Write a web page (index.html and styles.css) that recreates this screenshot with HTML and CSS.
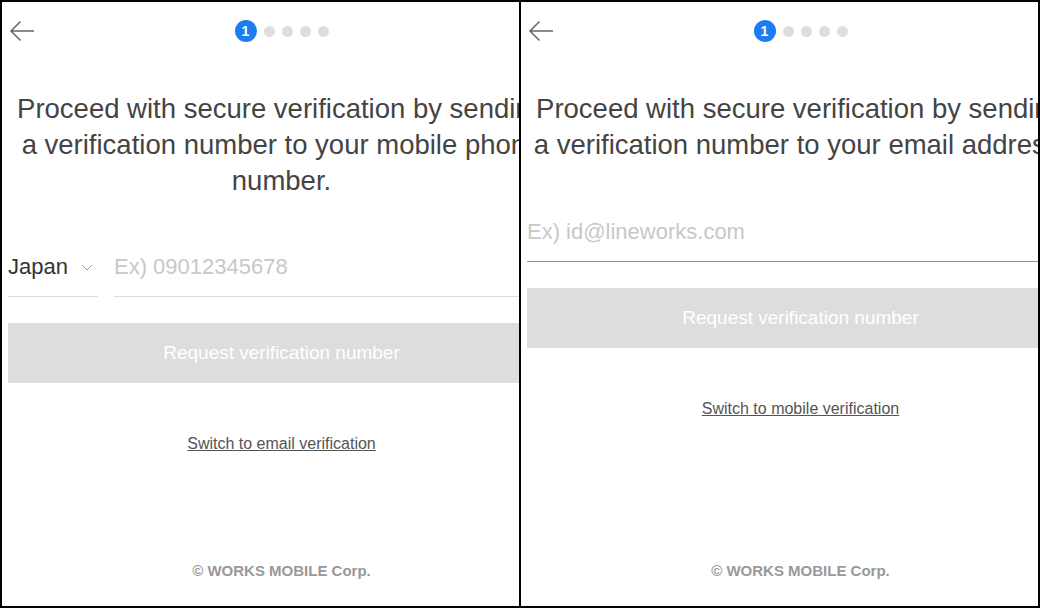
FILE: index.html
```html
<!DOCTYPE html>
<html lang="en">
<head>
<meta charset="utf-8">
<title>Verification</title>
<link rel="stylesheet" href="styles.css">
</head>
<body>
<div class="frame">
  <section class="panel">
    <div class="screen">
      <header class="header">
        <button class="back" aria-label="Back">
          <svg width="26" height="22" viewBox="0 0 26 22"><path d="M25 11H2M11.5 1.5L2 11l9.5 9.5" fill="none" stroke="#666" stroke-width="1.5"/></svg>
        </button>
        <div class="steps">
          <span class="step-current">1</span>
          <span class="dot"></span><span class="dot"></span><span class="dot"></span><span class="dot"></span>
        </div>
        <span></span>
      </header>
      <h1 class="title">Proceed with secure verification by sending a verification number to your mobile phone number.</h1>
      <div class="field-row">
        <div class="country">
          <span>Japan</span>
          <svg width="12" height="7" viewBox="0 0 12 7"><path d="M1 1l5 5 5-5" fill="none" stroke="#999" stroke-width="1"/></svg>
        </div>
        <div class="field">
          <input class="text-input" type="tel" placeholder="Ex) 09012345678">
        </div>
      </div>
      <button class="request">Request verification number</button>
      <a class="switch" href="#">Switch to email verification</a>
      <footer class="footer">© WORKS MOBILE Corp.</footer>
    </div>
  </section>
  <section class="panel">
    <div class="screen">
      <header class="header">
        <button class="back" aria-label="Back">
          <svg width="26" height="22" viewBox="0 0 26 22"><path d="M25 11H2M11.5 1.5L2 11l9.5 9.5" fill="none" stroke="#666" stroke-width="1.5"/></svg>
        </button>
        <div class="steps">
          <span class="step-current">1</span>
          <span class="dot"></span><span class="dot"></span><span class="dot"></span><span class="dot"></span>
        </div>
        <span></span>
      </header>
      <h1 class="title">Proceed with secure verification by sending a verification number to your email address.</h1>
      <div class="field-row email-row">
        <div class="field focused">
          <input class="text-input" type="email" placeholder="Ex) id@lineworks.com">
        </div>
      </div>
      <button class="request">Request verification number</button>
      <a class="switch" href="#">Switch to mobile verification</a>
      <footer class="footer">© WORKS MOBILE Corp.</footer>
    </div>
  </section>
</div>
</body>
</html>
```

FILE: styles.css
```css
html, body {
  margin: 0;
  padding: 0;
  background: #000;
}
body {
  font-family: "Liberation Sans", Arial, sans-serif;
  width: 1040px;
  height: 608px;
  overflow: hidden;
}
.frame {
  display: flex;
  gap: 2px;
  padding: 2px;
  box-sizing: border-box;
  width: 1040px;
  height: 608px;
}
.panel {
  width: 517px;
  height: 604px;
  overflow: hidden;
  background: #fff;
}
.screen {
  width: 559px;
  height: 604px;
  box-sizing: border-box;
  padding: 0 6px;
  display: flex;
  flex-direction: column;
}
.header {
  height: 58px;
  display: grid;
  grid-template-columns: 1fr auto 1fr;
  align-items: center;
}
.back {
  justify-self: start;
  margin-left: 1px;
  padding: 0;
  border: 0;
  background: none;
  display: flex;
  width: 26px;
  height: 22px;
}
.steps {
  display: flex;
  align-items: center;
  gap: 7px;
}
.step-current {
  width: 22px;
  height: 22px;
  border-radius: 50%;
  background: #1d7cf2;
  color: #fff;
  font-weight: bold;
  font-size: 14px;
  line-height: 22px;
  text-align: center;
}
.dot {
  width: 11px;
  height: 11px;
  border-radius: 50%;
  background: #dedede;
}
.title {
  margin: 31px 0 0;
  font-size: 27.5px;
  line-height: 36px;
  font-weight: normal;
  color: #444;
  text-align: center;
}
.field-row {
  margin-top: 49px;
  display: flex;
  gap: 16px;
}
.email-row {
  margin-top: 50px;
}
.country {
  width: 90px;
  height: 48px;
  border-bottom: 1px solid #ddd;
  display: flex;
  align-items: flex-start;
  justify-content: space-between;
  font-size: 22px;
  line-height: 38px;
  color: #333;
}
.country svg {
  margin: 16px 5px 0 0;
}
.field {
  flex: 1;
  min-width: 0;
  height: 48px;
  border-bottom: 1px solid #ddd;
}
.field.focused {
  border-bottom-color: #5a9cf0;
}
.text-input {
  display: block;
  width: 100%;
  box-sizing: border-box;
  margin: 0;
  padding: 0;
  height: 38px;
  border: 0;
  outline: none;
  font-family: "Liberation Sans", Arial, sans-serif;
  font-size: 22px;
  line-height: 38px;
  color: #333;
  background: transparent;
}
.text-input::placeholder {
  color: #c8c8c8;
}
.request {
  margin-top: 26px;
  height: 60px;
  width: 100%;
  border: 0;
  background: #dddddd;
  color: #fff;
  font-family: "Liberation Sans", Arial, sans-serif;
  font-size: 19px;
}
.switch {
  margin-top: 51px;
  align-self: center;
  font-size: 16px;
  line-height: 20px;
  color: #555;
  text-decoration: underline;
}
.footer {
  margin-top: auto;
  padding-bottom: 25px;
  text-align: center;
  font-size: 15px;
  line-height: 20px;
  font-weight: bold;
  color: #999;
}
```
